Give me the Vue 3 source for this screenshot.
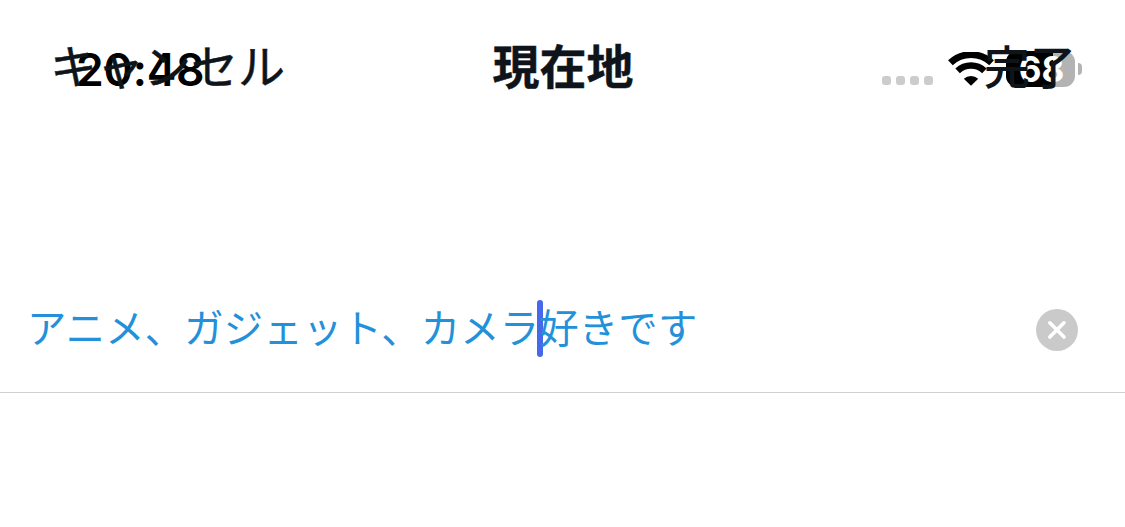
<script setup>
import {ref} from 'vue'

const time = ref('20:48')
const battery = ref(68)
const before = ref('アニメ、ガジェット、カメラ')
const after = ref('好きです')

function clearText() {
  before.value = ''
  after.value = ''
}
</script>

<template>
  <div class='screen'>
    <header class='nav'>
      <span class='cancel'>キャンセル</span>
      <h1>現在地</h1>
      <span class='done'>完了</span>
    </header>

    <div class='status'>
      <span class='time'>{{time}}</span>
      <div class='signal'>
        <i v-for='n in 4' :key='n'></i>
      </div>
      <svg class='wifi' width='46' height='34' viewBox='0 0 46 34'>
        <path d='M2.4 10.8 A30 30 0 0 1 43.6 10.8' fill='none' stroke='#000' stroke-width='6.8' />
        <path d='M9.6 18.8 A19.5 19.5 0 0 1 36.4 18.8' fill='none' stroke='#000' stroke-width='6.6' />
        <path d='M23 33.8 L15.8 26.8 A10.5 10.5 0 0 1 30.2 26.8 Z' />
      </svg>
      <div class='battery'>
        <div class='level' :style="{width: battery + '%'}"></div>
        <span>{{battery}}</span>
      </div>
      <i class='tip'></i>
    </div>

    <div class='field'>
      <p><span>{{before}}</span><i class='caret'></i><span>{{after}}</span></p>
      <button @click='clearText'>
        <svg width='42' height='42' viewBox='0 0 42 42'>
          <circle cx='21' cy='21' r='21' fill='#cacaca' />
          <path d='M13.8 13.8 L28 28 M28 13.8 L13.8 28' stroke='#fff' stroke-width='3.6' stroke-linecap='round' />
        </svg>
      </button>
    </div>
  </div>
</template>

<style>
body {
  margin: 0;
  background: #fff;
}
</style>

<style scoped>
.screen {
  position: relative;
  height: 527px;
  overflow: hidden;
  background: #fff;
  font-family: 'Noto Sans CJK JP', sans-serif;
  color: #0f141a;
}

/* stays above the status bar, which lies under it */
.nav {
  position: relative;
  z-index: 1;
  display: grid;
  grid-template-columns: 1fr auto 1fr;
  box-sizing: border-box;
  height: 268px;
  padding: 29px 49px 0 50px;
  font-size: 47px;
  line-height: 70px;
  align-items: start;
}

.nav h1 {
  margin: 0;
  font-size: 47px;
  font-weight: 700;
  -webkit-text-stroke: 0.4px #0f141a;
}

.cancel {
  -webkit-text-stroke: 0.5px #0f141a;
}

.done {
  justify-self: end;
  font-size: 46px;
  font-weight: 500;
}

.status {
  position: absolute;
  top: 50px;
  left: 76px;
  right: 43px;
  height: 38px;
  display: flex;
  align-items: center;
  color: #000;
}

.time {
  flex: 1;
  padding-top: 2px;
  font-family: Inter, sans-serif;
  font-size: 44.5px;
  font-weight: 600;
  letter-spacing: -0.2px;
  line-height: 40px;
}

.signal {
  display: flex;
  gap: 5px;
  margin: 23px 15px 0 0;
}

.signal i {
  width: 9px;
  height: 9px;
  border-radius: 3px;
  background: #ccc;
}

.battery {
  position: relative;
  width: 69px;
  height: 36px;
  margin-left: 12px;
  border-radius: 11px;
  background: #b3b3b3;
  overflow: hidden;
}

.level {
  height: 100%;
  background: #000;
}

.battery span {
  position: absolute;
  inset: 0;
  padding-left: 2px;
  text-align: center;
  font-family: Inter, sans-serif;
  font-size: 35px;
  font-weight: 700;
  line-height: 37px;
  color: #fff;
}

.tip {
  width: 4px;
  height: 12px;
  margin-left: 3px;
  border-radius: 0 4px 4px 0;
  background: #b3b3b3;
}

.field {
  display: flex;
  align-items: center;
  justify-content: space-between;
  height: 124px;
  padding: 0 47px 0 27px;
  border-bottom: 1px solid #d0d0d0;
}

.field p {
  display: flex;
  align-items: center;
  margin: 0 0 4px;
  font-size: 39.33px;
  line-height: 60px;
  letter-spacing: 0.2px;
  color: #2391da;
}

.field p span {
  padding-bottom: 4px;
}

.caret {
  width: 6px;
  height: 57px;
  margin: 0 -4px 0 -2px;
  border-radius: 3px;
  background: #4668ea;
}

.field button {
  display: flex;
  border: none;
  padding: 0;
  background: none;
  cursor: pointer;
}
</style>
